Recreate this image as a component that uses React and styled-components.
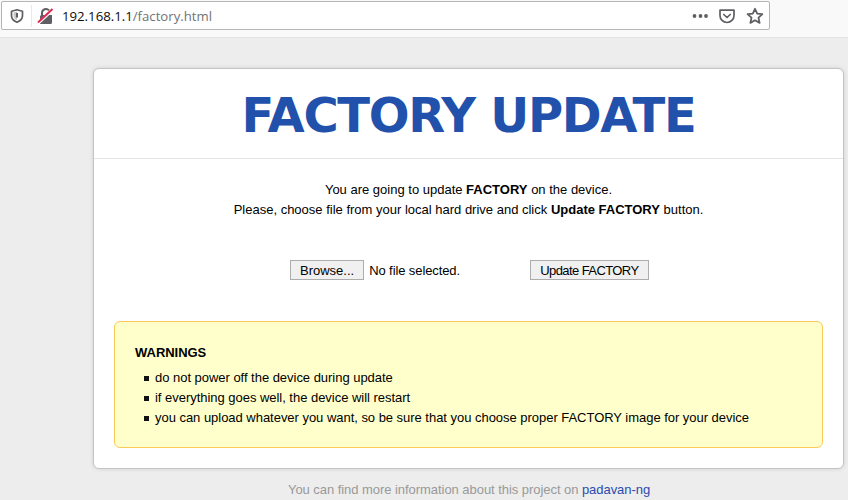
import React from 'react';
import styled, { createGlobalStyle } from 'styled-components';

const GlobalStyle = createGlobalStyle`
  html, body {
    margin: 0;
    padding: 0;
    height: 500px;
    overflow: hidden;
    background: #ededed;
    font-family: 'Liberation Sans', Arial, sans-serif;
  }
`;

const Toolbar = styled.div`
  height: 36px;
  background: #f9f9fa;
  border-bottom: 1px solid #e4e4e4;
  padding: 1px 78px 0 1px;
  box-sizing: content-box;
`;

const UrlBar = styled.div`
  height: 29px;
  background: #fff;
  border: 1px solid #b5b5b8;
  border-radius: 2px;
  display: flex;
  align-items: center;
  box-sizing: border-box;
  padding: 0 5px 0 7px;
`;

const Separator = styled.span`
  width: 1px;
  height: 22px;
  background: #e8e8e8;
  margin: 0 5px 0 6px;
`;

const Url = styled.div`
  font-family: 'Open Sans', 'Noto Sans', sans-serif;
  font-size: 13.2px;
  color: #0c0c0d;
  margin-left: 7px;
  flex: 1;
  span {
    color: #737373;
  }
`;

const Actions = styled.div`
  display: flex;
  align-items: center;
  gap: 11px;
`;

const Page = styled.main`
  padding: 30px 4px 0 93px;
`;

const Card = styled.section`
  height: 401px;
  box-sizing: border-box;
  background: #fff;
  border: 1px solid #c4c4c4;
  border-radius: 6px;
  box-shadow: 0 0 4px rgba(0, 0, 0, 0.12);
  display: flex;
  flex-direction: column;
`;

const Header = styled.h1`
  margin: 0;
  height: 90px;
  box-sizing: border-box;
  border-bottom: 1px solid #e5e5e5;
  text-align: center;
  font-family: 'DejaVu Sans', Verdana, sans-serif;
  font-size: 48px;
  line-height: 93px;
  letter-spacing: -1.3px;
  font-weight: 700;
  color: #2251ac;
`;

const Intro = styled.p`
  margin: 21px 0 0;
  text-align: center;
  font-size: 13px;
  line-height: 20px;
  color: #000;
`;

const UploadRow = styled.div`
  display: flex;
  align-items: center;
  margin: 40px 0 0 196px;
`;

const Button = styled.button`
  height: 20px;
  padding: 0 9px;
  background: #f0f0f0;
  border: 1px solid #adadad;
  border-radius: 0;
  font-family: 'Liberation Sans', Arial, sans-serif;
  font-size: 13px;
  letter-spacing: ${(p) => (p.$tight ? '-0.58px' : '0')};
  color: #000;
`;

const FileName = styled.span`
  font-size: 13px;
  letter-spacing: -0.1px;
  color: #000;
  margin-left: 5px;
  width: 161px;
`;

const Warning = styled.div`
  margin: 41px 20px 0;
  height: 127px;
  box-sizing: border-box;
  padding: 23px 20px 0;
  background: #ffc;
  border: 1px solid #fbc95c;
  border-radius: 6px;
  color: #000;
  font-size: 13px;
  letter-spacing: -0.03px;
`;

const WarningTitle = styled.div`
  font-weight: 700;
  line-height: 15px;
  margin-bottom: 8px;
`;

const WarningList = styled.ul`
  margin: 0;
  padding: 0 0 0 20px;
  list-style: none;
`;

const WarningItem = styled.li`
  position: relative;
  line-height: 20px;
  &::before {
    content: '';
    position: absolute;
    left: -11px;
    top: 8px;
    width: 5px;
    height: 5px;
    background: #111;
  }
`;

const Footer = styled.footer`
  margin-top: 13px;
  padding-left: 195px;
  font-size: 13px;
  letter-spacing: -0.05px;
  color: #999;
  a {
    color: #2b4bb0;
    text-decoration: none;
  }
`;

const ShieldIcon = () => (
  <svg width="16" height="16" viewBox="0 0 16 16">
    <path d="M2.5 3.2 8 1.800l5.500 1.400v4.600c0 3-2.400 5.200-5.500 6.500-3.100-1.300-5.500-3.500-5.500-6.500z" fill="none" stroke="#5f5f63" strokeWidth="1.700" strokeLinejoin="round" />
    <path d="M8 3.500v8.700c-1.900-1-3.400-2.500-3.400-4.500V4.400z" fill="#5f5f63" opacity="0.35" />
    <rect x="7" y="5" width="2" height="4.500" fill="#5f5f63" />
  </svg>
);

const BrokenLockIcon = () => (
  <svg width="18" height="18" viewBox="0 0 18 18">
    <path d="M5 8V6a4 4 0 0 1 7-2.600" fill="none" stroke="#5f5f63" strokeWidth="2" />
    <path d="M3 9.500A1.500 1.500 0 0 1 4.500 8H15v7.500A1.500 1.500 0 0 1 13.500 17h-10.500z" fill="#5f5f63" />
    <path d="M1 16.500 16.500 2" stroke="#fff" strokeWidth="3" />
    <path d="M1 15.500 15.500 2" stroke="#e22850" strokeWidth="2" />
  </svg>
);

const MoreIcon = () => (
  <svg width="16" height="16" viewBox="0 0 16 16" fill="#5f5f63">
    <circle cx="2.500" cy="8" r="1.900" />
    <circle cx="8.500" cy="8" r="1.900" />
    <circle cx="14" cy="8" r="1.900" />
  </svg>
);

const PocketIcon = () => (
  <svg width="16" height="16" viewBox="0 0 16 16" fill="none" stroke="#5f5f63" strokeWidth="1.700">
    <path d="M1 2.200h14v5.300a7 7 0 0 1-14 0z" strokeLinejoin="round" />
    <path d="m4.800 6.500 3.200 3 3.200-3" strokeLinecap="round" strokeLinejoin="round" />
  </svg>
);

const StarIcon = () => (
  <svg width="18" height="18" viewBox="0 0 18 18" fill="none" stroke="#5f5f63" strokeWidth="1.800" strokeLinejoin="round">
    <path d="m9 1.800 2.200 4.800 5.200.6-3.900 3.500 1.100 5.200L9 13.300l-4.600 2.600 1.100-5.200L1.600 7.200l5.200-.6z" />
  </svg>
);

const warnings = [
  'do not power off the device during update',
  'if everything goes well, the device will restart',
  'you can upload whatever you want, so be sure that you choose proper FACTORY image for your device',
];

const App = () => (
  <>
    <GlobalStyle />
    <Toolbar>
      <UrlBar>
        <ShieldIcon />
        <Separator />
        <BrokenLockIcon />
        <Url>
          192.168.1.1<span>/factory.html</span>
        </Url>
        <Actions>
          <MoreIcon />
          <PocketIcon />
          <StarIcon />
        </Actions>
      </UrlBar>
    </Toolbar>
    <Page>
      <Card>
        <Header>FACTORY UPDATE</Header>
        <Intro>
          You are going to update <b>FACTORY</b> on the device.
          <br />
          Please, choose file from your local hard drive and click <b>Update FACTORY</b> button.
        </Intro>
        <UploadRow>
          <Button>Browse...</Button>
          <FileName>No file selected.</FileName>
          <Button $tight>Update FACTORY</Button>
        </UploadRow>
        <Warning>
          <WarningTitle>WARNINGS</WarningTitle>
          <WarningList>
            {warnings.map((w) => (
              <WarningItem key={w}>{w}</WarningItem>
            ))}
          </WarningList>
        </Warning>
      </Card>
      <Footer>
        You can find more information about this project on <a href="#padavan">padavan-ng</a>
      </Footer>
    </Page>
  </>
);

export default App;
